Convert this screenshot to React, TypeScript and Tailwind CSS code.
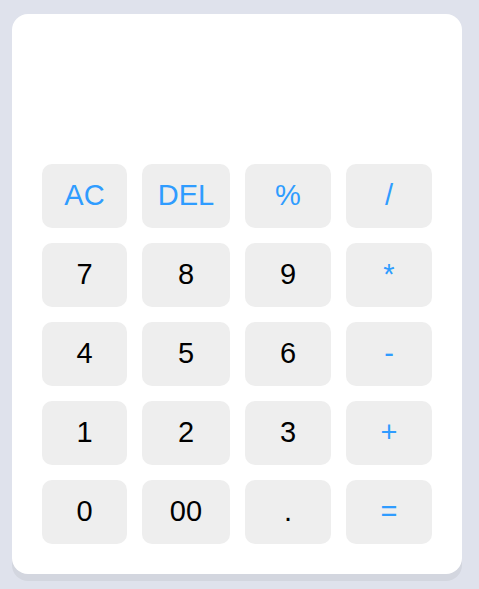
const keys: { label: string; accent?: boolean }[] = [
  { label: 'AC', accent: true },
  { label: 'DEL', accent: true },
  { label: '%', accent: true },
  { label: '/', accent: true },
  { label: '7' },
  { label: '8' },
  { label: '9' },
  { label: '*', accent: true },
  { label: '4' },
  { label: '5' },
  { label: '6' },
  { label: '-', accent: true },
  { label: '1' },
  { label: '2' },
  { label: '3' },
  { label: '+', accent: true },
  { label: '0' },
  { label: '00' },
  { label: '.' },
  { label: '=', accent: true },
];

export default function App() {
  return (
    <div
      className="min-h-[589px] bg-[#dfe2ec] px-3 pt-[14px]"
      style={{ fontFamily: '"Liberation Sans", Arial, sans-serif' }}
    >
      <div className="w-[450px] rounded-2xl bg-white px-[30px] pb-[30px] pt-[30px] shadow-[0_7px_0_#d3d6df]">
        {/* display area, empty */}
        <div className="h-[105px] text-right text-4xl text-black"></div>
        <div className="mt-[15px] grid grid-cols-[85px_88px_86px_86px] gap-x-[15px] gap-y-[15px]">
          {keys.map((key) => (
            <button
              key={key.label}
              className={`flex h-16 items-center justify-center rounded-[10px] bg-[#eeeeee] text-[29px] ${
                key.accent ? 'text-[#2f9cff]' : 'text-black'
              }`}
            >
              {key.label}
            </button>
          ))}
        </div>
      </div>
    </div>
  );
}
